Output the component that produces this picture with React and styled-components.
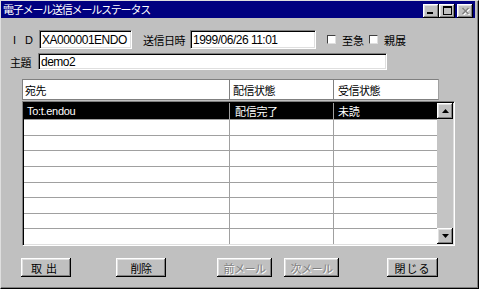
import React from 'react'
import styled, { createGlobalStyle } from 'styled-components'

const GlobalStyle = createGlobalStyle`
  html, body {
    margin: 0;
    padding: 0;
    background: #c0c0c0;
  }
  body {
    font-family: "Liberation Sans", "Noto Sans CJK JP", sans-serif;
  }
`

const rows = [
  { to: 'To:t.endou', send: '配信完了', recv: '未読' },
  {}, {}, {}, {}, {}, {}, {}, {},
]

const App = () => {
  return (
    <>
      <GlobalStyle />
      <Window>
        <TitleBar>
          <Title>電子メール送信メールステータス</Title>
          <TitleButtons>
            <TitleButton>
              <svg width="8" height="8" viewBox="0 0 8 8">
                <rect x="0" y="5" width="6" height="2" fill="#000" />
              </svg>
            </TitleButton>
            <TitleButton>
              <svg width="9" height="9" viewBox="0 0 9 9">
                <rect x="0.5" y="0.5" width="8" height="8" fill="none" stroke="#000" />
                <rect x="0" y="0" width="9" height="2" fill="#000" />
              </svg>
            </TitleButton>
            <TitleButton $ml={2}>
              <svg width="9" height="8" viewBox="0 0 9 8">
                <path d="M1.5 1 L7.5 7 M7.5 1 L1.5 7" stroke="#fff" strokeWidth="1.5" transform="translate(1 1)" />
                <path d="M1.5 1 L7.5 7 M7.5 1 L1.5 7" stroke="#808080" strokeWidth="1.5" />
              </svg>
            </TitleButton>
          </TitleButtons>
        </TitleBar>

        <Content>
          <FormRow $mt={12} $h={19} $pl={12}>
            <Label $w={26} $spacing={3}>I D</Label>
            <Field $w={93}>XA000001ENDO</Field>
            <Label $w={47} $ml={11}>送信日時</Label>
            <Field $w={126}>1999/06/26 11:01</Field>
            <Check $ml={11} />
            <CheckLabel>至急</CheckLabel>
            <Check $ml={5} />
            <CheckLabel>親展</CheckLabel>
          </FormRow>
          <FormRow $mt={4} $h={17} $pl={9}>
            <Label $w={28}>主題</Label>
            <Field $w={349}>demo2</Field>
          </FormRow>

          <Table>
            <HeaderRow>
              <HeadCell>宛先</HeadCell>
              <HeadCell>配信状態</HeadCell>
              <HeadCell>受信状態</HeadCell>
            </HeaderRow>
            <ListBody>
              <Rows>
                {rows.map((r, i) => (
                  <Row key={i} $selected={i === 0}>
                    <Cell>{r.to}</Cell>
                    <Cell>{r.send}</Cell>
                    <Cell>{r.recv}</Cell>
                  </Row>
                ))}
              </Rows>
              <ScrollBar>
                <ScrollButton>
                  <svg width="7" height="4" viewBox="0 0 7 4">
                    <path d="M3.5 0 L7 4 L0 4 Z" fill="#000" />
                  </svg>
                </ScrollButton>
                <Track />
                <ScrollButton>
                  <svg width="7" height="4" viewBox="0 0 7 4">
                    <path d="M0 0 L7 0 L3.5 4 Z" fill="#000" />
                  </svg>
                </ScrollButton>
              </ScrollBar>
            </ListBody>
          </Table>

          <ButtonBar>
            <Button $w={50} $spacing={4}>取出</Button>
            <Button $w={50} $ml={45}>削除</Button>
            <Button $w={55} $ml={51} disabled>前メール</Button>
            <Button $w={55} $ml={12} disabled>次メール</Button>
            <Button $w={51} $ml={48} $spacing={1}>閉じる</Button>
          </ButtonBar>
        </Content>
      </Window>
    </>
  )
}

export default App

const Window = styled.div`
  width: 479px;
  height: 289px;
  box-sizing: border-box;
  background: #c0c0c0;
  border-top: 1px solid #dfdfdf;
  border-left: 1px solid #dfdfdf;
  border-right: 1px solid #000;
  border-bottom: 1px solid #000;
  box-shadow: inset -1px -1px 0 #808080;
  padding-right: 3px;
  display: flex;
  flex-direction: column;
`

const TitleBar = styled.div`
  height: 17px;
  background: #000080;
  display: flex;
  align-items: center;
  padding: 0 2px;
`

const Title = styled.div`
  color: #fff;
  font-size: 11px;
  letter-spacing: -1.2px;
  font-family: "Noto Sans CJK JP", sans-serif;
  line-height: 17px;
`

const TitleButtons = styled.div`
  margin-left: auto;
  display: flex;
  align-items: center;
  margin-top: 2px;
`

const raised = `
  background: #c0c0c0;
  box-shadow: inset -1px -1px 0 #000, inset 1px 1px 0 #fff,
    inset -2px -2px 0 #808080, inset 2px 2px 0 #dfdfdf;
`

const TitleButton = styled.div`
  width: 16px;
  height: 14px;
  margin-left: ${p => p.$ml || 0}px;
  ${raised}
  display: flex;
  align-items: center;
  justify-content: center;
`

const Content = styled.div`
  display: flex;
  flex-direction: column;
`

const FormRow = styled.div`
  display: flex;
  align-items: center;
  height: ${p => p.$h}px;
  margin-top: ${p => p.$mt}px;
  padding-left: ${p => p.$pl}px;
`

const Label = styled.div`
  width: ${p => p.$w}px;
  margin-left: ${p => p.$ml || 0}px;
  font-size: 11px;
  letter-spacing: ${p => p.$spacing ?? -0.5}px;
  color: #000;
  white-space: nowrap;
`

const Field = styled.div`
  width: ${p => p.$w}px;
  height: 100%;
  box-sizing: border-box;
  background: #fff;
  border-top: 1px solid #808080;
  border-left: 1px solid #808080;
  border-right: 1px solid #fff;
  border-bottom: 1px solid #fff;
  box-shadow: inset 1px 1px 0 #000, inset -1px -1px 0 #dfdfdf;
  padding-left: 2px;
  font-size: 12px;
  letter-spacing: -0.5px;
  display: flex;
  align-items: center;
  color: #000;
  white-space: nowrap;
  overflow: hidden;
`

const Check = styled.div`
  width: 9px;
  height: 9px;
  margin-left: ${p => p.$ml}px;
  box-sizing: border-box;
  background: #fff;
  border-top: 1px solid #404040;
  border-left: 1px solid #404040;
  border-right: 1px solid #dfdfdf;
  border-bottom: 1px solid #dfdfdf;
`

const CheckLabel = styled.div`
  margin-left: 6px;
  font-size: 11px;
  letter-spacing: 0px;
  color: #000;
`

const Table = styled.div`
  margin-top: 9px;
  margin-left: 21px;
  display: flex;
  flex-direction: column;
`

const HeaderRow = styled.div`
  width: 417px;
  height: 21px;
  box-sizing: border-box;
  border: 1px solid #808080;
  border-right-color: #a0a0a0;
  background: #fff;
  display: grid;
  grid-template-columns: 207px 104px 104px;
`

const HeadCell = styled.div`
  border-right: 1px solid #808080;
  padding-left: 3px;
  font-size: 11px;
  letter-spacing: -0.5px;
  display: flex;
  align-items: center;
  &:first-child { padding-left: 2px; }
  &:last-child { border-right: none; padding-left: 4px; }
`

const ListBody = styled.div`
  margin-top: 1px;
  width: 433px;
  height: 145px;
  box-sizing: border-box;
  border-top: 1px solid #808080;
  border-left: 1px solid #808080;
  border-right: 1px solid #fff;
  border-bottom: 1px solid #fff;
  box-shadow: inset 1px 1px 0 #000, inset -1px -1px 0 #dfdfdf;
  padding: 1px;
  display: flex;
`

const Rows = styled.div`
  width: 413px;
  display: flex;
  flex-direction: column;
  background: #fff;
`

const Row = styled.div`
  flex: 1;
  display: grid;
  grid-template-columns: 206px 104px 103px;
  border-bottom: 1px solid #a0a0a0;
  background: ${p => (p.$selected ? '#000' : '#fff')};
  color: ${p => (p.$selected ? '#fff' : '#000')};
  &:last-child { border-bottom: none; }
`

const Cell = styled.div`
  border-right: 1px solid #a0a0a0;
  padding-left: 3px;
  font-size: 11px;
  letter-spacing: -0.3px;
  display: flex;
  align-items: center;
  white-space: nowrap;
  &:nth-child(2) { padding-left: 5px; }
  &:last-child { border-right: none; padding-left: 4px; }
`

const ScrollBar = styled.div`
  width: 16px;
  display: flex;
  flex-direction: column;
`

const ScrollButton = styled.div`
  height: 16px;
  ${raised}
  display: flex;
  align-items: center;
  justify-content: center;
`

const Track = styled.div`
  flex: 1;
  background: #c4c4c4;
`

const ButtonBar = styled.div`
  margin-top: 12px;
  padding-left: 20px;
  display: flex;
`

const Button = styled.button`
  width: ${p => p.$w}px;
  height: 19px;
  margin: 0 0 0 ${p => p.$ml || 0}px;
  padding: 0;
  border: none;
  ${raised}
  font-family: "Noto Sans CJK JP", sans-serif;
  font-size: 11px;
  letter-spacing: ${p => p.$spacing ?? -0.5}px;
  color: #000;
  &:disabled {
    color: #808080;
    text-shadow: 1px 1px 0 #fff;
  }
`
